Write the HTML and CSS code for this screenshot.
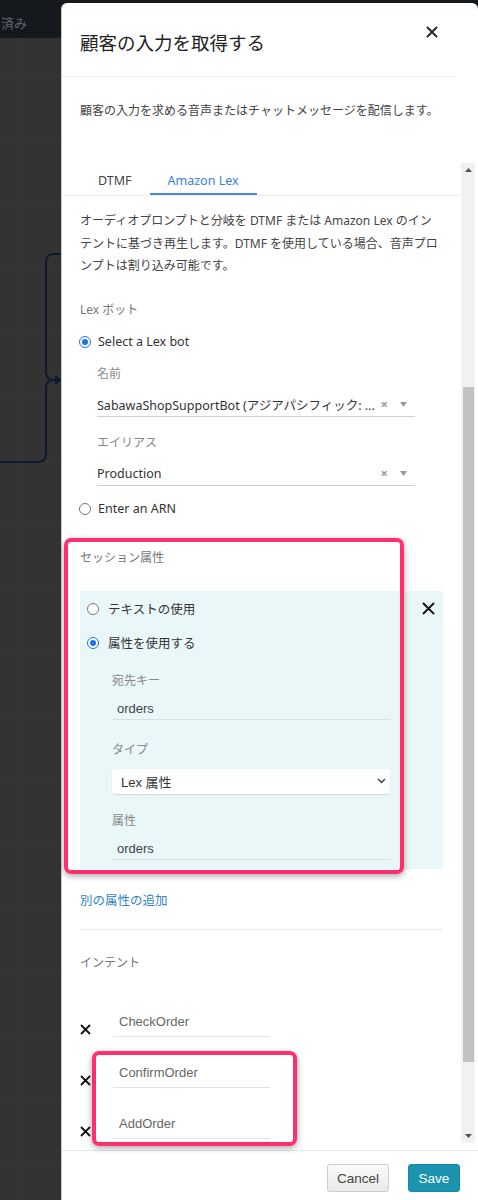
FILE: index.html
```html
<!DOCTYPE html>
<html lang="ja">
<head>
<meta charset="utf-8">
<title>顧客の入力を取得する</title>
<link rel="stylesheet" href="styles.css">
</head>
<body>
<div class="canvas">
  <div class="topbar"><span class="topbar-text">済み</span></div>
  <svg class="connectors" width="64" height="480" viewBox="0 0 64 480">
    <path d="M62 254 H54 Q46 254 46 262 V372 Q46 380 54 380 H56" fill="none" stroke="#0e1a2e" stroke-width="2"/>
    <path d="M54 380 Q46 380 46 388 V454 Q46 462 38 462 H0" fill="none" stroke="#0e1a2e" stroke-width="2"/>
    <path d="M55 375 L62 380 L55 385 Z" fill="#0e1a2e"/>
  </svg>
</div>

<aside class="panel">
  <header class="panel-header">
    <h1 class="panel-title">顧客の入力を取得する</h1>
    <button class="icon-btn header-close" aria-label="閉じる">
      <svg width="12" height="12" viewBox="0 0 12 12"><path d="M1 1 L11 11 M11 1 L1 11" stroke="#222" stroke-width="1.8" fill="none"/></svg>
    </button>
  </header>
  <p class="panel-desc">顧客の入力を求める音声またはチャットメッセージを配信します。</p>

  <div class="panel-body">
    <div class="scroll-content">
      <nav class="tabs">
        <span class="tab">DTMF</span>
        <span class="tab tab-active">Amazon Lex</span>
      </nav>

      <p class="intro">オーディオプロンプトと分岐を DTMF または Amazon Lex のイン<br>テントに基づき再生します。DTMF を使用している場合、音声プロ<br>ンプトは割り込み可能です。</p>

      <div class="section-label lex-label">Lex ボット</div>

      <label class="radio-row first-radio"><span class="radio checked"></span><span class="radio-text">Select a Lex bot</span></label>

      <div class="indent">
        <div class="field-label label-name">名前</div>
        <div class="select-line">
          <span class="select-value">SabawaShopSupportBot (アジアパシフィック: ...</span>
          <span class="select-clear">×</span>
          <svg class="select-caret" width="7" height="5" viewBox="0 0 7 5"><path d="M0 0 H7 L3.5 5 Z" fill="#999"/></svg>
        </div>
        <div class="field-label label-alias">エイリアス</div>
        <div class="select-line">
          <span class="select-value">Production</span>
          <span class="select-clear">×</span>
          <svg class="select-caret" width="7" height="5" viewBox="0 0 7 5"><path d="M0 0 H7 L3.5 5 Z" fill="#999"/></svg>
        </div>
      </div>

      <label class="radio-row arn-radio"><span class="radio"></span><span class="radio-text">Enter an ARN</span></label>

      <div class="section-label session-label">セッション属性</div>

      <div class="attr-card">
        <div class="attr-main">
          <label class="radio-row card-radio"><span class="radio"></span><span class="radio-text">テキストの使用</span></label>
          <label class="radio-row card-radio second"><span class="radio checked"></span><span class="radio-text">属性を使用する</span></label>
          <div class="attr-fields">
            <div class="field-label key-label">宛先キー</div>
            <div class="text-input">orders</div>
            <div class="field-label type-label">タイプ</div>
            <div class="type-select">
              <span>Lex 属性</span>
              <svg width="9" height="6" viewBox="0 0 9 6"><path d="M1 1 L4.5 4.5 L8 1" stroke="#444" stroke-width="1.5" fill="none"/></svg>
            </div>
            <div class="field-label attr-label">属性</div>
            <div class="text-input">orders</div>
          </div>
        </div>
        <button class="icon-btn card-close" aria-label="削除">
          <svg width="13" height="13" viewBox="0 0 13 13"><path d="M1 1 L12 12 M12 1 L1 12" stroke="#111" stroke-width="1.9" fill="none"/></svg>
        </button>
      </div>

      <a class="add-link">別の属性の追加</a>
      <hr class="divider">

      <div class="section-label intent-label">インテント</div>

      <div class="intent-list">
        <div class="intent-row">
          <svg class="intent-x" width="11" height="11" viewBox="0 0 11 11"><path d="M1 1 L10 10 M10 1 L1 10" stroke="#111" stroke-width="1.8" fill="none"/></svg>
          <div class="intent-input">CheckOrder</div>
        </div>
        <div class="intent-row">
          <svg class="intent-x" width="11" height="11" viewBox="0 0 11 11"><path d="M1 1 L10 10 M10 1 L1 10" stroke="#111" stroke-width="1.8" fill="none"/></svg>
          <div class="intent-input">ConfirmOrder</div>
        </div>
        <div class="intent-row">
          <svg class="intent-x" width="11" height="11" viewBox="0 0 11 11"><path d="M1 1 L10 10 M10 1 L1 10" stroke="#111" stroke-width="1.8" fill="none"/></svg>
          <div class="intent-input">AddOrder</div>
        </div>
      </div>
    </div>

    <div class="scrollbar">
      <div class="sb-arrow"><svg width="7" height="4" viewBox="0 0 7 4"><path d="M0 4 L3.5 0 L7 4 Z" fill="#505050"/></svg></div>
      <div class="sb-gap"></div>
      <div class="sb-thumb"></div>
      <div class="sb-fill"></div>
      <div class="sb-arrow"><svg width="7" height="4" viewBox="0 0 7 4"><path d="M0 0 L3.5 4 L7 0 Z" fill="#505050"/></svg></div>
    </div>
  </div>

  <footer class="panel-footer">
    <button class="btn btn-cancel">Cancel</button>
    <button class="btn btn-save">Save</button>
  </footer>
</aside>

<div class="highlight highlight-session"></div>
<div class="highlight highlight-intents"></div>
</body>
</html>
```

FILE: styles.css
```css
* { box-sizing: border-box; }

html, body {
  margin: 0;
  padding: 0;
}

body {
  position: relative;
  width: 478px;
  height: 1200px;
  overflow: hidden;
  background: #333333;
  font-family: "Noto Sans", "Noto Sans CJK JP", sans-serif;
  color: #333;
}

/* ---------- background canvas ---------- */
.canvas {
  height: 1200px;
  background-color: #333333;
  background-image:
    linear-gradient(to bottom, rgba(255,255,255,0.03) 1px, transparent 1px),
    linear-gradient(to right, rgba(255,255,255,0.03) 1px, transparent 1px);
  background-size: 64px 64px;
  background-position: 18px 12px;
}

.topbar {
  height: 38px;
  background: #15181d;
  display: flex;
  align-items: flex-end;
  padding: 0 0 6px 1px;
  overflow: hidden;
}

.topbar-text {
  font-size: 13px;
  color: #5f6670;
  white-space: nowrap;
}

.connectors {
  position: absolute;
  left: 0;
  top: 0;
}

/* ---------- panel (drawer overlay) ---------- */
.panel {
  position: absolute;
  top: 3px;
  left: 61px;
  right: 0;
  bottom: 0;
  background: #fff;
  border-left: 1px solid #c9c9c9;
  border-radius: 6px 6px 0 0;
  display: flex;
  flex-direction: column;
}

.panel-header {
  height: 74px;
  margin-right: 22px;
  padding: 0 18px 0 18px;
  border-bottom: 1px solid #efefef;
  display: flex;
  align-items: flex-start;
  justify-content: space-between;
  flex-shrink: 0;
}

.panel-title {
  margin: 25px 0 0 0;
  font-size: 18.5px;
  line-height: 30px;
  font-weight: 400;
  color: #222;
}

.icon-btn {
  border: 0;
  background: transparent;
  padding: 0;
  display: flex;
  cursor: pointer;
}

.header-close {
  margin-top: 23px;
}

.panel-desc {
  margin: 0;
  height: 80px;
  padding: 24px 18px 0 18px;
  font-size: 12px;
  line-height: 20px;
  color: #444;
  flex-shrink: 0;
}

.panel-body {
  flex: 1;
  min-height: 0;
  display: flex;
}

.scroll-content {
  flex: 1;
  min-width: 0;
  overflow: hidden;
}

/* ---------- tabs ---------- */
.tabs {
  display: flex;
  padding-left: 18px;
  height: 39px;
  border-bottom: 1px solid #ececec;
}

.tab {
  padding: 12px 18px 0 18px;
  height: 38px;
  font-size: 12.5px;
  line-height: 24px;
  color: #444;
  border-bottom: 2px solid transparent;
}

.tab-active {
  color: #3b7fd4;
  border-bottom-color: #4a8ad9;
}

.intro {
  margin: 14px 18px 0 18px;
  font-size: 12px;
  line-height: 22.5px;
  color: #444;
  white-space: nowrap;
}

.section-label {
  font-size: 12px;
  line-height: 18px;
  color: #777;
  padding-left: 18px;
}

.lex-label { margin-top: 23px; }
.session-label { margin-top: 30px; }
.intent-label { margin-top: 24px; }

/* ---------- radios ---------- */
.radio-row {
  display: flex;
  align-items: center;
  height: 20px;
  gap: 7px;
  font-size: 12.5px;
  color: #333;
}

.first-radio { margin-top: 13px; padding-left: 17px; }
.arn-radio { margin-top: 13px; padding-left: 17px; }

.radio {
  width: 12px;
  height: 12px;
  border-radius: 50%;
  border: 1px solid #777;
  background: #fff;
  flex-shrink: 0;
  position: relative;
}

.radio.checked {
  border-color: #1a73e8;
}

.radio.checked::after {
  content: "";
  position: absolute;
  left: 2px;
  top: 2px;
  width: 6px;
  height: 6px;
  border-radius: 50%;
  background: #1a73e8;
}

.radio-text { white-space: nowrap; }

/* ---------- fields ---------- */
.indent {
  padding-left: 35px;
  width: 353px;
}

.field-label {
  font-size: 12px;
  line-height: 18px;
  color: #888;
}

.label-name { margin-top: 13px; }
.label-alias { margin-top: 17px; }

.select-line {
  margin-top: 11px;
  height: 23px;
  display: flex;
  align-items: center;
  border-bottom: 1px solid #cfcfcf;
  padding-right: 8px;
}

.select-value {
  flex: 1;
  font-size: 12.5px;
  color: #333;
  white-space: nowrap;
  overflow: hidden;
}

.select-clear {
  font-size: 13px;
  font-weight: 700;
  color: #9a9a9a;
  margin-right: 12px;
  line-height: 1;
}

.select-caret { flex-shrink: 0; }

/* ---------- session attribute card ---------- */
.attr-card {
  margin: 24px 18px 0 18px;
  background: #eaf7f9;
  display: flex;
  padding: 8px 8px 9px 7px;
}

.attr-main { flex: 1; }

.card-radio { gap: 9px; }
.card-radio.second { margin-top: 14px; }

.card-close { margin-top: 3px; }

.attr-fields {
  padding-left: 25px;
  width: 303px;
}

.key-label { margin-top: 19px; }
.type-label { margin-top: 21px; }
.attr-label { margin-top: 18px; }

.text-input {
  margin-top: 8px;
  height: 22px;
  padding-left: 5px;
  font-family: "Liberation Sans", "Noto Sans CJK JP", sans-serif;
  font-size: 13px;
  line-height: 21px;
  color: #444;
  border-bottom: 1px solid #dcdfe0;
}

.type-select {
  margin-top: 10px;
  height: 25px;
  background: #fff;
  border-radius: 3px;
  box-shadow: 0 1px 1px rgba(0,0,0,0.12);
  display: flex;
  align-items: center;
  justify-content: space-between;
  padding: 0 4px 0 9px;
  font-family: "Liberation Sans", "Noto Sans CJK JP", sans-serif;
  font-size: 13px;
  color: #333;
}

/* ---------- link / divider ---------- */
.add-link {
  display: block;
  margin: 22px 0 0 18px;
  font-size: 12.5px;
  line-height: 20px;
  color: #3184c0;
}

.divider {
  margin: 18px 18px 0 18px;
  border: 0;
  border-top: 1px solid #ececec;
}

/* ---------- intents ---------- */
.intent-list {
  margin-top: 37px;
  padding-left: 18px;
  display: flex;
  flex-direction: column;
  gap: 23px;
}

.intent-row {
  display: flex;
  align-items: flex-end;
  gap: 22px;
}

.intent-x {
  flex-shrink: 0;
  margin-bottom: 2px;
}

.intent-input {
  width: 157px;
  padding: 3px 0 4px 6px;
  font-family: "Liberation Sans", sans-serif;
  font-size: 13px;
  line-height: 20px;
  color: #666;
  border-bottom: 1px solid #e2e2e2;
}

/* ---------- fake scrollbar ---------- */
.scrollbar {
  width: 14px;
  margin: 6px 3px 7px 0;
  background: #f1f1f1;
  display: flex;
  flex-direction: column;
  align-items: center;
}

.sb-arrow {
  height: 14px;
  display: flex;
  align-items: center;
  justify-content: center;
}

.sb-gap { height: 210px; }

.sb-thumb {
  width: 11px;
  height: 675px;
  background: #c1c1c1;
}

.sb-fill { flex: 1; }

/* ---------- footer ---------- */
.panel-footer {
  height: 50px;
  border-top: 1px solid #e6e6e6;
  display: flex;
  justify-content: flex-end;
  align-items: flex-start;
  gap: 19px;
  padding: 13px 18px 0 0;
  flex-shrink: 0;
}

.btn {
  height: 28px;
  border-radius: 3px;
  font-family: "Liberation Sans", sans-serif;
  font-size: 13.5px;
  padding: 0;
  cursor: pointer;
}

.btn-cancel {
  width: 62px;
  border: 1px solid #cdcdcd;
  background: linear-gradient(#fbfbfb, #e9e9e9);
  color: #444;
}

.btn-save {
  width: 52px;
  border: 1px solid #168aa4;
  background: #1b93ae;
  color: #fff;
}

/* ---------- annotation highlights (overlay) ---------- */
.highlight {
  position: absolute;
  border: 4px solid #ff2f6e;
  border-radius: 7px;
  box-shadow: 0 2px 6px rgba(0,0,0,0.35);
  pointer-events: none;
}

.highlight-session {
  left: 64px;
  top: 538px;
  width: 340px;
  height: 336px;
}

.highlight-intents {
  left: 92px;
  top: 1051px;
  width: 205px;
  height: 95px;
}
```
